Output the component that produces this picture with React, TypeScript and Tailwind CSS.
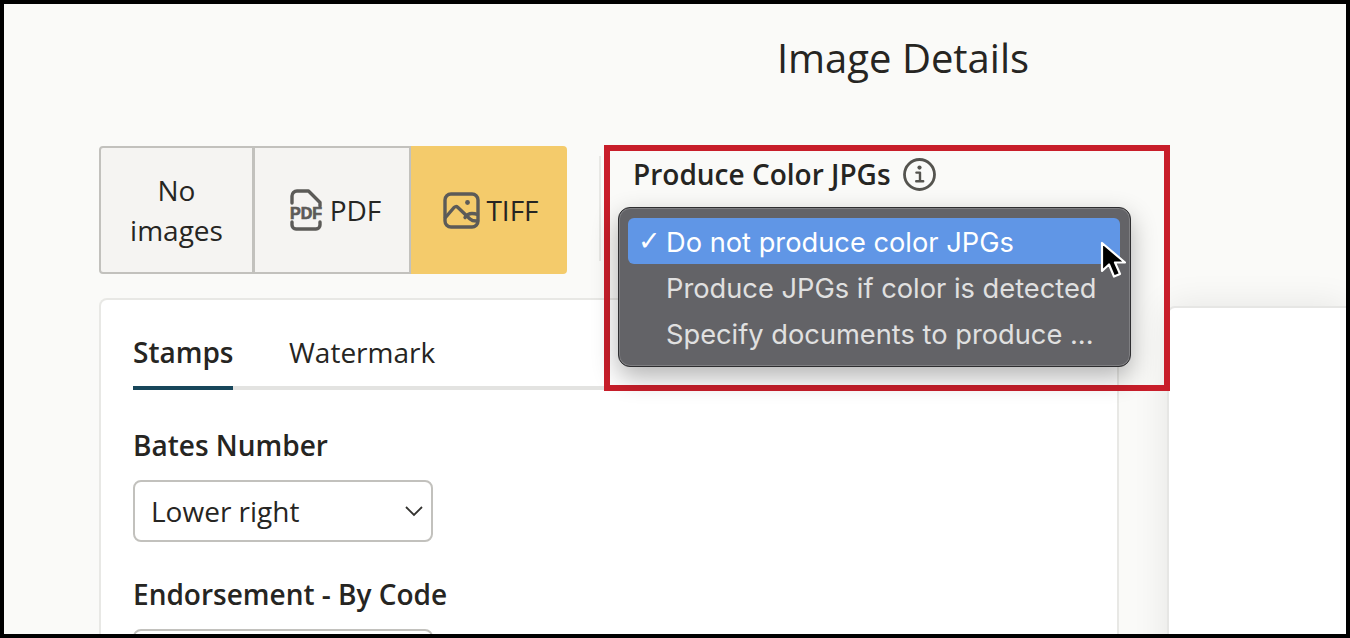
import React from "react";

function PdfIcon() {
  return (
    <svg width="36" height="42" viewBox="0 0 36 42" fill="none" className="shrink-0">
      <path d="M4 14V7a5 5 0 0 1 5-5h11.500L32 13.500V17" stroke="#5c5b58" strokeWidth="3.400" strokeLinecap="round" strokeLinejoin="round" />
      <path d="M4 33v3a4 4 0 0 0 4 4h20a4 4 0 0 0 4-4v-3" stroke="#5c5b58" strokeWidth="3.400" strokeLinecap="round" />
      <text x="18" y="29.500" textAnchor="middle" fontFamily="'Liberation Sans', sans-serif" fontWeight="700" fontSize="16" stroke="#5c5b58" strokeWidth="0.700" fill="#5c5b58">PDF</text>
    </svg>
  );
}

function ImageIcon() {
  return (
    <svg width="37" height="37" viewBox="0 0 37 37" fill="none" className="shrink-0">
      <rect x="2" y="2" width="33" height="33" rx="6" stroke="#5c5b58" strokeWidth="3.400" />
      <path d="M2.500 25.500 11 15.500c1-1.200 2.600-1.200 3.700-.2L27 27c1.600 1.500 4 2.200 7.500 2" stroke="#5c5b58" strokeWidth="3.400" strokeLinecap="round" strokeLinejoin="round" />
      <path d="M22 25.500c1.600-2.500 3.600-4 7-4 2 0 4 .4 5.500 1" stroke="#5c5b58" strokeWidth="3.400" strokeLinecap="round" />
      <circle cx="24.500" cy="10.500" r="2.400" fill="#5c5b58" />
    </svg>
  );
}

function InfoIcon() {
  return (
    <svg width="33" height="33" viewBox="0 0 33 33" fill="none" className="shrink-0">
      <circle cx="16.500" cy="16.500" r="15" stroke="#55544f" strokeWidth="2.800" />
      <circle cx="16.500" cy="9.600" r="2.100" fill="#55544f" />
      <path d="M13.400 14.600h3.600v8.200M13.200 23.200h7" stroke="#55544f" strokeWidth="2.400" strokeLinecap="round" strokeLinejoin="round" />
    </svg>
  );
}

function Cursor() {
  return (
    <svg width="28" height="40" viewBox="0 0 28 40" className="absolute left-[1096px] top-[237px]">
      <path d="M2 2v28l7-6.500 5 12 6-2.600-5-11.400h10z" fill="#000" stroke="#fff" strokeWidth="2.200" strokeLinejoin="round" />
    </svg>
  );
}

export default function App() {
  return (
    <div className="relative h-[638px] w-[1350px] overflow-hidden border-4 border-black bg-[#fafaf8] font-['Open_Sans','Noto_Sans',sans-serif] text-[#262522]">
      <h1 className="h-[142px] pl-[456px] pt-[29px] text-center text-[40px] leading-[50px]">Image Details</h1>

      <main className="pl-[95px]">
        <section className="flex h-[128px] items-start">
          <div className="flex h-[128px] w-[468px] text-[28px]">
            <button className="flex w-[155px] items-center justify-center rounded-l-[4px] border-2 border-[#c2c1bd] bg-[#f5f4f2] leading-[40px]">
              No<br />images
            </button>
            <button className="-ml-[1px] flex w-[158px] items-center justify-center gap-[6px] border-2 border-[#c2c1bd] bg-[#f5f4f2] pl-[5px]">
              <PdfIcon />
              <span>PDF</span>
            </button>
            <button className="flex w-[156px] items-center justify-center gap-[6px] rounded-r-[4px] bg-[#f4cb6b] pl-[4px]">
              <ImageIcon />
              <span>TIFF</span>
            </button>
          </div>
          <div className="ml-[32px] mt-[10px] h-[105px] w-[2px] bg-[#e8e8e5]" />
          <div className="ml-[32px] flex items-center gap-[12px] pt-[10px] text-[28px] font-semibold leading-[36px]">
            Produce Color JPGs
            <InfoIcon />
          </div>
        </section>

        <section className="mt-[24px] flex items-start">
          <div className="h-[400px] w-[1020px] rounded-t-[8px] border-2 border-b-0 border-[#e8e8e5] bg-white pl-[32px] pr-[32px]">
            <div className="flex h-[90px] gap-[56px] border-b-[4px] border-[#e3e3e1] text-[28px] leading-[36px]">
              <div className="-mb-[4px] h-[90px] w-[100px] border-b-[4px] border-[#17465a] pt-[34px] font-semibold">Stamps</div>
              <div className="pt-[34px]">Watermark</div>
            </div>
            <h2 className="mt-[37px] text-[28px] font-semibold leading-[36px]">Bates Number</h2>
            <div className="mt-[17px] flex h-[62px] w-[300px] items-center justify-between rounded-[8px] border-2 border-[#c2c1bd] pl-[16px] pr-[7px] text-[28px]">
              <span>Lower right</span>
              <svg width="20" height="12" viewBox="0 0 20 12" fill="none">
                <path d="M2 2l8 8 8-8" stroke="#33322f" strokeWidth="1.800" />
              </svg>
            </div>
            <h2 className="mt-[34px] text-[28px] font-semibold leading-[36px]">Endorsement - By Code</h2>
            <div className="mt-[17px] h-[62px] w-[300px] rounded-[8px] border-2 border-[#c2c1bd]" />
          </div>
          <div className="ml-[48px] mt-[8px] h-[400px] flex-1 rounded-tl-[8px] border-l-2 border-t-2 border-[#e6e6e4] bg-white shadow-[0_0_36px_rgba(0,0,0,0.09)]" />
        </section>
      </main>

      <div className="absolute left-[600px] top-[141px] h-[246px] w-[566px] border-[6px] border-[#c81e2a]" />

      <div className="absolute left-[614px] top-[203px] h-[160px] w-[513px] rounded-[12px] border border-[#2e2e30] bg-[#636367] pb-[9px] pl-[9px] pr-[10px] pt-[10px] font-['Inter','Liberation_Sans',sans-serif] text-[27.250px] leading-[46px] text-[#e0e0e0] shadow-[inset_0_0_0_1px_rgba(255,255,255,0.18),0_10px_26px_rgba(0,0,0,0.3)]">
        <div className="flex h-[46px] items-center rounded-[6px] bg-[#6096e6] pl-[10px] text-white">
          <span className="w-[28px] font-['DejaVu_Sans',sans-serif] text-[27px] font-bold leading-[46px]">✓</span>
          <span className="pt-[3px]">Do not produce color JPGs</span>
        </div>
        <div className="h-[46px] pl-[38px] pt-[2px]">Produce JPGs if color is detected</div>
        <div className="h-[46px] pl-[38px] pt-[2px]">Specify documents to produce ...</div>
      </div>
      <Cursor />
    </div>
  );
}
